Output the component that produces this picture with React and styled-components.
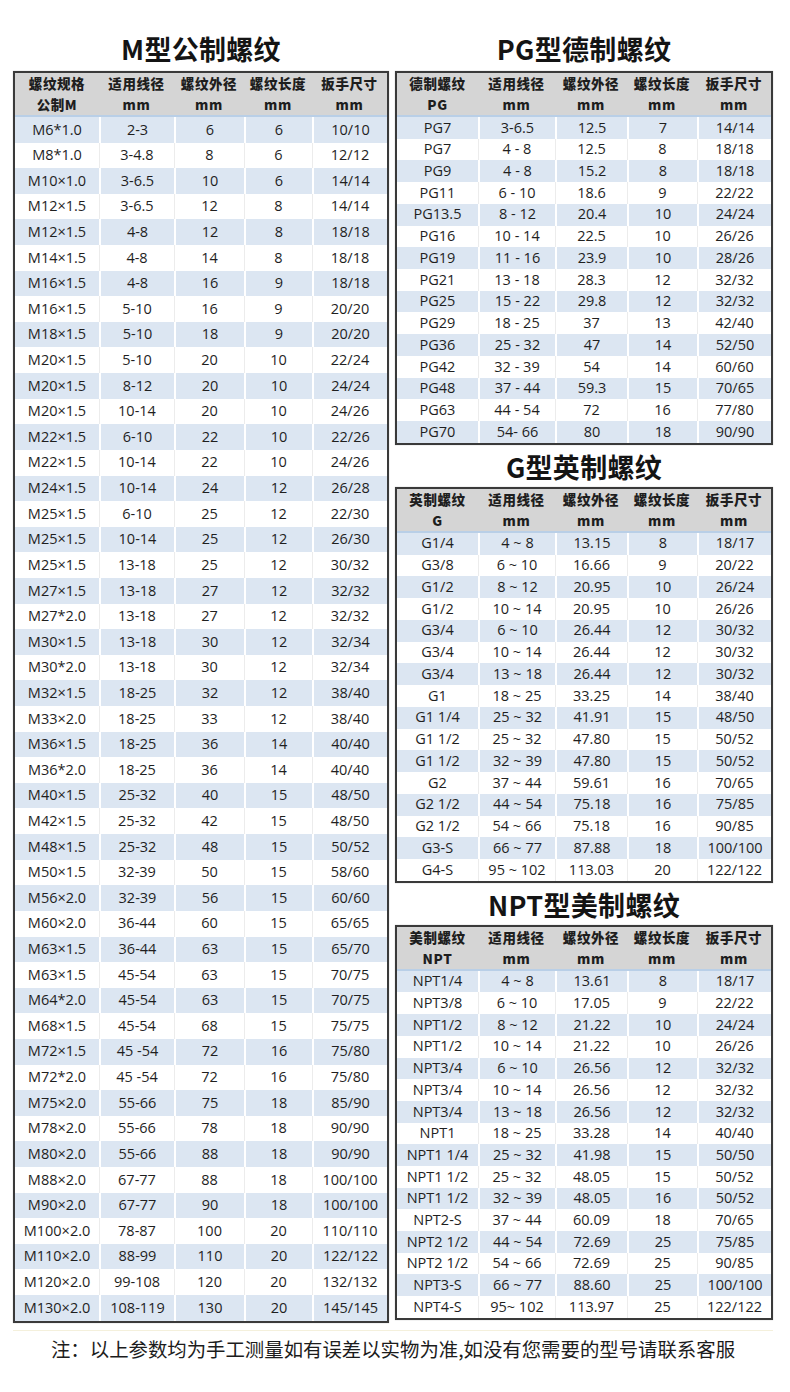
import React from 'react';
import styled, { createGlobalStyle } from 'styled-components';

const GlobalStyle = createGlobalStyle`
  html, body {
    margin: 0;
    padding: 0;
    background: #ffffff;
  }
  * {
    box-sizing: border-box;
  }
`;

const mRows = [
  ['M6*1.0', '2-3', '6', '6', '10/10'],
  ['M8*1.0', '3-4.8', '8', '6', '12/12'],
  ['M10×1.0', '3-6.5', '10', '6', '14/14'],
  ['M12×1.5', '3-6.5', '12', '8', '14/14'],
  ['M12×1.5', '4-8', '12', '8', '18/18'],
  ['M14×1.5', '4-8', '14', '8', '18/18'],
  ['M16×1.5', '4-8', '16', '9', '18/18'],
  ['M16×1.5', '5-10', '16', '9', '20/20'],
  ['M18×1.5', '5-10', '18', '9', '20/20'],
  ['M20×1.5', '5-10', '20', '10', '22/24'],
  ['M20×1.5', '8-12', '20', '10', '24/24'],
  ['M20×1.5', '10-14', '20', '10', '24/26'],
  ['M22×1.5', '6-10', '22', '10', '22/26'],
  ['M22×1.5', '10-14', '22', '10', '24/26'],
  ['M24×1.5', '10-14', '24', '12', '26/28'],
  ['M25×1.5', '6-10', '25', '12', '22/30'],
  ['M25×1.5', '10-14', '25', '12', '26/30'],
  ['M25×1.5', '13-18', '25', '12', '30/32'],
  ['M27×1.5', '13-18', '27', '12', '32/32'],
  ['M27*2.0', '13-18', '27', '12', '32/32'],
  ['M30×1.5', '13-18', '30', '12', '32/34'],
  ['M30*2.0', '13-18', '30', '12', '32/34'],
  ['M32×1.5', '18-25', '32', '12', '38/40'],
  ['M33×2.0', '18-25', '33', '12', '38/40'],
  ['M36×1.5', '18-25', '36', '14', '40/40'],
  ['M36*2.0', '18-25', '36', '14', '40/40'],
  ['M40×1.5', '25-32', '40', '15', '48/50'],
  ['M42×1.5', '25-32', '42', '15', '48/50'],
  ['M48×1.5', '25-32', '48', '15', '50/52'],
  ['M50×1.5', '32-39', '50', '15', '58/60'],
  ['M56×2.0', '32-39', '56', '15', '60/60'],
  ['M60×2.0', '36-44', '60', '15', '65/65'],
  ['M63×1.5', '36-44', '63', '15', '65/70'],
  ['M63×1.5', '45-54', '63', '15', '70/75'],
  ['M64*2.0', '45-54', '63', '15', '70/75'],
  ['M68×1.5', '45-54', '68', '15', '75/75'],
  ['M72×1.5', '45 -54', '72', '16', '75/80'],
  ['M72*2.0', '45 -54', '72', '16', '75/80'],
  ['M75×2.0', '55-66', '75', '18', '85/90'],
  ['M78×2.0', '55-66', '78', '18', '90/90'],
  ['M80×2.0', '55-66', '88', '18', '90/90'],
  ['M88×2.0', '67-77', '88', '18', '100/100'],
  ['M90×2.0', '67-77', '90', '18', '100/100'],
  ['M100×2.0', '78-87', '100', '20', '110/110'],
  ['M110×2.0', '88-99', '110', '20', '122/122'],
  ['M120×2.0', '99-108', '120', '20', '132/132'],
  ['M130×2.0', '108-119', '130', '20', '145/145'],
];

const pgRows = [
  ['PG7', '3-6.5', '12.5', '7', '14/14'],
  ['PG7', '4 - 8', '12.5', '8', '18/18'],
  ['PG9', '4 - 8', '15.2', '8', '18/18'],
  ['PG11', '6 - 10', '18.6', '9', '22/22'],
  ['PG13.5', '8 - 12', '20.4', '10', '24/24'],
  ['PG16', '10 - 14', '22.5', '10', '26/26'],
  ['PG19', '11 - 16', '23.9', '10', '28/26'],
  ['PG21', '13 - 18', '28.3', '12', '32/32'],
  ['PG25', '15 - 22', '29.8', '12', '32/32'],
  ['PG29', '18 - 25', '37', '13', '42/40'],
  ['PG36', '25 - 32', '47', '14', '52/50'],
  ['PG42', '32 - 39', '54', '14', '60/60'],
  ['PG48', '37 - 44', '59.3', '15', '70/65'],
  ['PG63', '44 - 54', '72', '16', '77/80'],
  ['PG70', '54- 66', '80', '18', '90/90'],
];

const gRows = [
  ['G1/4', '4 ~ 8', '13.15', '8', '18/17'],
  ['G3/8', '6 ~ 10', '16.66', '9', '20/22'],
  ['G1/2', '8 ~ 12', '20.95', '10', '26/24'],
  ['G1/2', '10 ~ 14', '20.95', '10', '26/26'],
  ['G3/4', '6 ~ 10', '26.44', '12', '30/32'],
  ['G3/4', '10 ~ 14', '26.44', '12', '30/32'],
  ['G3/4', '13 ~ 18', '26.44', '12', '30/32'],
  ['G1', '18 ~ 25', '33.25', '14', '38/40'],
  ['G1 1/4', '25 ~ 32', '41.91', '15', '48/50'],
  ['G1 1/2', '25 ~ 32', '47.80', '15', '50/52'],
  ['G1 1/2', '32 ~ 39', '47.80', '15', '50/52'],
  ['G2', '37 ~ 44', '59.61', '16', '70/65'],
  ['G2 1/2', '44 ~ 54', '75.18', '16', '75/85'],
  ['G2 1/2', '54 ~ 66', '75.18', '16', '90/85'],
  ['G3-S', '66 ~ 77', '87.88', '18', '100/100'],
  ['G4-S', '95 ~ 102', '113.03', '20', '122/122'],
];

const nptRows = [
  ['NPT1/4', '4 ~ 8', '13.61', '8', '18/17'],
  ['NPT3/8', '6 ~ 10', '17.05', '9', '22/22'],
  ['NPT1/2', '8 ~ 12', '21.22', '10', '24/24'],
  ['NPT1/2', '10 ~ 14', '21.22', '10', '26/26'],
  ['NPT3/4', '6 ~ 10', '26.56', '12', '32/32'],
  ['NPT3/4', '10 ~ 14', '26.56', '12', '32/32'],
  ['NPT3/4', '13 ~ 18', '26.56', '12', '32/32'],
  ['NPT1', '18 ~ 25', '33.28', '14', '40/40'],
  ['NPT1 1/4', '25 ~ 32', '41.98', '15', '50/50'],
  ['NPT1 1/2', '25 ~ 32', '48.05', '15', '50/52'],
  ['NPT1 1/2', '32 ~ 39', '48.05', '16', '50/52'],
  ['NPT2-S', '37 ~ 44', '60.09', '18', '70/65'],
  ['NPT2 1/2', '44 ~ 54', '72.69', '25', '75/85'],
  ['NPT2 1/2', '54 ~ 66', '72.69', '25', '90/85'],
  ['NPT3-S', '66 ~ 77', '88.60', '25', '100/100'],
  ['NPT4-S', '95~ 102', '113.97', '25', '122/122'],
];

const leftCols = [84, 75, 70, 68, 75];
const rightCols = [81, 77, 72, 70, 74];

const Page = styled.div`
  width: 790px;
  padding: 30px 17px 40px 13px;
  font-family: "Open Sans", "Noto Sans CJK SC", sans-serif;
  color: #222;
`;

const Columns = styled.div`
  display: grid;
  grid-template-columns: 376px 378px;
  column-gap: 6px;
  align-items: start;
`;

const Column = styled.div`
  display: flex;
  flex-direction: column;
`;

const Title = styled.h2`
  margin: ${(p) => (p.$first ? '0 0 3px' : '3px 0 1px')};
  height: 38px;
  line-height: 38px;
  text-align: center;
  font-family: "Noto Sans CJK SC", sans-serif;
  font-size: 27px;
  font-weight: 700;
  color: #141414;
  letter-spacing: 0.3px;
`;

const Table = styled.table`
  width: 100%;
  table-layout: fixed;
  border-collapse: separate;
  border-spacing: 0;
  border: 2px solid #3a3a3a;
  box-shadow: 0 0 1px rgba(0, 0, 0, 0.3);
`;

const HeadCell = styled.th`
  height: 21px;
  padding: 0;
  background: #d5d5d5;
  font-family: "Noto Sans CJK SC", sans-serif;
  font-weight: 900;
  font-size: 13.5px;
  line-height: 21px;
  letter-spacing: 0.6px;
  color: #1e1e1e;
  text-align: center;
  white-space: nowrap;
  border-bottom: ${(p) => (p.$last ? '2px solid #b9cfe7' : '0')};
`;

const Row = styled.tr`
  background: ${(p) => (p.$shade ? '#dce6f2' : '#ffffff')};
`;

const Cell = styled.td`
  height: ${(p) => p.$h}px;
  padding: 0;
  text-align: center;
  font-size: 14.5px;
  line-height: 1;
  color: #1f1f1f;
  white-space: nowrap;
  border-left: ${(p) => (p.$first ? '0' : p.$shade ? '2px solid #ffffff' : '1px solid #ececec')};
`;

const Footer = styled.p`
  margin: 7px 0 0;
  border-top: 1px solid #f4f0dc;
  line-height: 36px;
  text-align: center;
  font-family: "Noto Sans CJK SC", sans-serif;
  font-size: 19.4px;
  color: #1c1c1c;
`;

function SpecTable({ title, first, label, sub, rows, cols, rowHeight }) {
  const heads = [label, '适用线径', '螺纹外径', '螺纹长度', '扳手尺寸'];
  const subs = [sub, 'mm', 'mm', 'mm', 'mm'];
  return (
    <>
      <Title $first={first}>{title}</Title>
      <Table>
        <colgroup>
          {cols.map((w, i) => (
            <col key={i} style={{ width: `${w}px` }} />
          ))}
        </colgroup>
        <thead>
          <tr>
            {heads.map((h, i) => (
              <HeadCell key={i}>{h}</HeadCell>
            ))}
          </tr>
          <tr>
            {subs.map((h, i) => (
              <HeadCell key={i} $last>
                {h}
              </HeadCell>
            ))}
          </tr>
        </thead>
        <tbody>
          {rows.map((r, ri) => (
            <Row key={ri} $shade={ri % 2 === 0}>
              {r.map((v, ci) => (
                <Cell key={ci} $h={rowHeight} $first={ci === 0} $shade={ri % 2 === 0}>
                  {v}
                </Cell>
              ))}
            </Row>
          ))}
        </tbody>
      </Table>
    </>
  );
}

export default function App() {
  return (
    <Page>
      <GlobalStyle />
      <Columns>
        <Column>
          <SpecTable
            first
            title="M型公制螺纹"
            label="螺纹规格"
            sub="公制M"
            rows={mRows}
            cols={leftCols}
            rowHeight={25.62}
          />
        </Column>
        <Column>
          <SpecTable
            first
            title="PG型德制螺纹"
            label="德制螺纹"
            sub="PG"
            rows={pgRows}
            cols={rightCols}
            rowHeight={21.73}
          />
          <SpecTable
            title="G型英制螺纹"
            label="英制螺纹"
            sub="G"
            rows={gRows}
            cols={rightCols}
            rowHeight={21.75}
          />
          <SpecTable
            title="NPT型美制螺纹"
            label="美制螺纹"
            sub="NPT"
            rows={nptRows}
            cols={rightCols}
            rowHeight={21.7}
          />
        </Column>
      </Columns>
      <Footer>注：以上参数均为手工测量如有误差以实物为准,如没有您需要的型号请联系客服</Footer>
    </Page>
  );
}
